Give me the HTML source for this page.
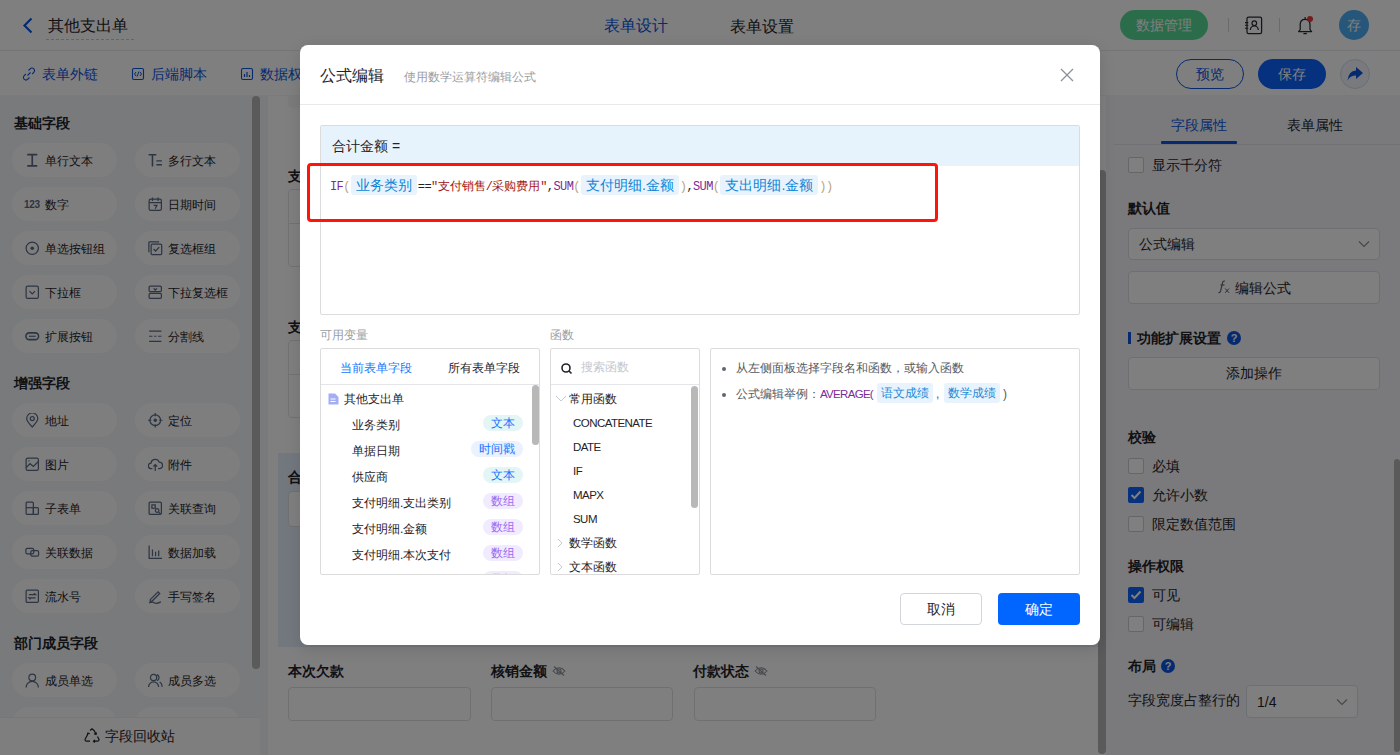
<!DOCTYPE html>
<html><head><meta charset="utf-8">
<style>
*{box-sizing:border-box;margin:0;padding:0}
html,body{width:1400px;height:755px;overflow:hidden;background:#fff;font-family:"Liberation Sans",sans-serif;color:#1f2329}
.a{position:absolute}
.nw{white-space:nowrap}
/* header */
#hdr{left:0;top:0;width:1400px;height:51px;background:#fff;border-bottom:1px solid #e9eaec}
#tb{left:0;top:51px;width:1400px;height:45px;background:#fff;border-bottom:1px solid #f4f5f7}
/* sidebar */
#side{left:0;top:96px;width:268px;height:659px;background:#f2f4f7}
.sec{position:absolute;left:14px;font-size:14px;font-weight:bold;line-height:16px;color:#1f2329}
.fb{position:absolute;width:105px;height:34px;border-radius:17px;background:#fdfdfd;font-size:12px;line-height:34px;color:#1f2329}
.fb svg{position:absolute;left:13px;top:10px}
.fb span{position:absolute;left:33px;top:1px}
#canvas{left:268px;top:96px;width:838px;height:659px;background:#fff}
#rp{left:1106px;top:96px;width:294px;height:659px;background:#f4f5f8}
#mask{left:0;top:0;width:1400px;height:755px;background:rgba(0,0,0,.5)}
#modal{left:300px;top:45px;width:800px;height:600px;background:#fff;border-radius:8px;box-shadow:0 4px 16px rgba(0,0,0,.12)}
.pill{height:16px;border-radius:8px;font-size:12px;line-height:16px;text-align:center}
.t1{background:#e3f6f5;color:#1677ff}
.t2{background:#eaf1ff;color:#1677ff}
.t3{background:#f0ebff;color:#9b6cf0}
.fn{font-size:11.5px;line-height:20px;color:#1f2329;letter-spacing:-0.55px}
.fx{font-family:"Liberation Mono",monospace;font-size:12px;line-height:20px;color:#1f2329}
.fx .p{color:#7b2a9a;letter-spacing:-0.6px}
.fx .br{color:#b9a47a;letter-spacing:-0.6px}
.fx .k{color:#1f2329;letter-spacing:-0.6px}
.fx .s{color:#a31515;font-family:"Liberation Sans",sans-serif;font-size:12px}
.fx .s.m{font-family:"Liberation Mono",monospace;letter-spacing:-0.6px}
.fx .tg{display:inline-block;position:relative;top:-1px;font-family:"Liberation Sans",sans-serif;font-size:14px;line-height:20px;height:20px;padding:0 5px;margin:0 1px;background:#e9f3fd;color:#0a84d6;border-radius:3px;vertical-align:top}
.tg2{font-size:12px;line-height:20px;height:20px;background:#e8f3fd;color:#1b8ad6;border-radius:3px}
</style></head><body>
<div id="page">
 <div id="hdr" class="a">
  <svg class="a" style="left:22px;top:17px" width="12" height="17" viewBox="0 0 12 17"><path d="M9.5 1.5 L2.5 8.5 L9.5 15.5" fill="none" stroke="#0a55e0" stroke-width="2.2"/></svg>
  <div class="a nw" style="left:48px;top:16px;font-size:16px;line-height:20px;color:#1f2329">其他支出单</div>
  <div class="a" style="left:46px;top:39px;width:88px;border-top:1px dashed #c9cbd0"></div>
  <div class="a nw" style="left:604px;top:16px;font-size:16px;line-height:20px;color:#0a55e0">表单设计</div>
  <div class="a nw" style="left:730px;top:16px;font-size:16.3px;line-height:20px;color:#1f2329">表单设置</div>
  <div class="a nw" style="left:1120px;top:10px;width:88px;height:30px;border-radius:15px;background:#56d896;color:#fff;font-size:14px;line-height:30px;text-align:center">数据管理</div>
  <div class="a" style="left:1228px;top:18px;width:1px;height:14px;background:#d5d7db"></div>
  <svg class="a" style="left:1244px;top:15px" width="20" height="20" viewBox="0 0 20 20"><rect x="3" y="2" width="14.6" height="16.6" rx="1.6" fill="none" stroke="#262b33" stroke-width="1.25"/><circle cx="10.3" cy="8.2" r="2.3" fill="none" stroke="#262b33" stroke-width="1.2"/><path d="M6.3 15 Q6.6 11 10.3 11 Q14 11 14.3 15" fill="none" stroke="#262b33" stroke-width="1.2"/><path d="M1 7.6h3.3M1 10.3h3.3M1 13.2h3.3" stroke="#262b33" stroke-width="1.1"/></svg>
  <div class="a" style="left:1279px;top:18px;width:1px;height:14px;background:#d5d7db"></div>
  <svg class="a" style="left:1296px;top:15px" width="20" height="21" viewBox="0 0 20 21"><path d="M2.6 16.6 L4.2 14.6 V9.6 Q4.2 4.3 9.1 4.3 Q14 4.3 14 9.6 V14.6 L15.6 16.6 Z" fill="none" stroke="#262b33" stroke-width="1.25" stroke-linejoin="round"/><path d="M7.4 18.6h3.4" stroke="#262b33" stroke-width="1.3"/><path d="M9.1 2v2.3" stroke="#262b33" stroke-width="1.2"/><circle cx="14" cy="3.9" r="3" fill="#e8383d"/></svg>
  <div class="a nw" style="left:1339px;top:10px;width:30px;height:30px;border-radius:15px;background:#4dacf2;color:#fff;font-size:14px;line-height:30px;text-align:center">存</div>
 </div>
 <div id="tb" class="a">
  <svg class="a" style="left:22px;top:16px" width="14" height="14" viewBox="0 0 14 14"><path d="M5.5 8.5 L8.5 5.5" stroke="#0a55e0" stroke-width="1.1"/><path d="M6.5 3.5 L8.2 1.8 a2.3 2.3 0 0 1 3.6 3.6 L10.2 7" fill="none" stroke="#0a55e0" stroke-width="1.1"/><path d="M7.5 10.5 L5.8 12.2 a2.3 2.3 0 0 1 -3.6 -3.6 L3.8 7" fill="none" stroke="#0a55e0" stroke-width="1.1"/></svg>
  <div class="a nw" style="left:42px;top:14px;font-size:14px;line-height:18px;color:#0a55e0">表单外链</div>
  <svg class="a" style="left:131px;top:16px" width="14" height="14" viewBox="0 0 14 14"><rect x="1.5" y="1.5" width="11" height="11" rx="1.5" fill="none" stroke="#0a55e0" stroke-width="1.1"/><path d="M5 5 L3.5 7 L5 9 M9 5 L10.5 7 L9 9 M8 4.5 L6 9.5" fill="none" stroke="#0a55e0" stroke-width="1"/></svg>
  <div class="a nw" style="left:151px;top:14px;font-size:14px;line-height:18px;color:#0a55e0">后端脚本</div>
  <svg class="a" style="left:240px;top:16px" width="14" height="14" viewBox="0 0 14 14"><rect x="1.5" y="1.5" width="11" height="11" rx="1.5" fill="none" stroke="#0a55e0" stroke-width="1.1"/><path d="M4.5 10 V7 M7 10 V5 M9.5 10 V8" stroke="#0a55e0" stroke-width="1.2"/></svg>
  <div class="a nw" style="left:260px;top:14px;font-size:14px;line-height:18px;color:#0a55e0">数据权限</div>
  <div class="a nw" style="left:1176px;top:8px;width:68px;height:30px;border-radius:15px;border:1px solid #0a55e0;color:#0a55e0;font-size:14px;line-height:28px;text-align:center">预览</div>
  <div class="a nw" style="left:1258px;top:8px;width:68px;height:30px;border-radius:15px;background:#0a62ff;color:#fff;font-size:14px;line-height:30px;text-align:center">保存</div>
  <div class="a" style="left:1340px;top:8px;width:30px;height:30px;border-radius:15px;border:1px solid #d3dcec;background:#f0f4fb"></div>
  <svg class="a" style="left:1346px;top:15px" width="18" height="16" viewBox="0 0 18 16"><path d="M10 1 L17 7 L10 13 L10 9.5 Q4 9.5 1.5 14.5 Q2.5 5 10 4.5 Z" fill="#0a55e0"/></svg>
 </div>
 <div id="side" class="a">
<div class="sec nw" style="top:19px">基础字段</div>
<div class="fb nw" style="left:12px;top:47px"><svg width="14.5" height="14.5" viewBox="0 0 13 13" fill="none" stroke="#5a6a86" stroke-width="1.1"><path d="M2 1.5h9M2 11.5h9M6.5 1.5v10" stroke-width="1.5"/></svg><span>单行文本</span></div>
<div class="fb nw" style="left:135px;top:47px"><svg width="14.5" height="14.5" viewBox="0 0 13 13" fill="none" stroke="#5a6a86" stroke-width="1.1"><path d="M0.5 1.5h7M4 1.5v10.5" stroke-width="1.4"/><path d="M7.5 7h5M7.5 10.5h5" stroke-width="1.2"/></svg><span>多行文本</span></div>
<div class="fb nw" style="left:12px;top:91px"><svg width="16" height="13" viewBox="0 0 16 13" style="left:12px"><text x="0" y="10.5" font-family="Liberation Sans" font-weight="bold" font-size="10" letter-spacing="-0.3" fill="#5a6a86">123</text></svg><span>数字</span></div>
<div class="fb nw" style="left:135px;top:91px"><svg width="14.5" height="14.5" viewBox="0 0 13 13" fill="none" stroke="#5a6a86" stroke-width="1.1"><rect x="1" y="2" width="11" height="10" rx="1.5"/><path d="M1 5h11M4 0.5v3M9 0.5v3M5 7.5h3l-1.5 3"/></svg><span>日期时间</span></div>
<div class="fb nw" style="left:12px;top:135px"><svg width="14.5" height="14.5" viewBox="0 0 13 13" fill="none" stroke="#5a6a86" stroke-width="1.1"><circle cx="6.5" cy="6.5" r="5.5"/><circle cx="6.5" cy="6.5" r="1.6" fill="#5a6a86" stroke="none"/></svg><span>单选按钮组</span></div>
<div class="fb nw" style="left:135px;top:135px"><svg width="14.5" height="14.5" viewBox="0 0 13 13" fill="none" stroke="#5a6a86" stroke-width="1.1"><path d="M0.8 10V1.5a0.8 0.8 0 0 1 .8-.8H10"/><rect x="2.8" y="2.8" width="9.5" height="9.5" rx="1"/><path d="M5 7.2l1.8 1.8 3.3-3.5"/></svg><span>复选框组</span></div>
<div class="fb nw" style="left:12px;top:179px"><svg width="14.5" height="14.5" viewBox="0 0 13 13" fill="none" stroke="#5a6a86" stroke-width="1.1"><rect x="1" y="1" width="11" height="11" rx="1.5"/><path d="M4 5.5l2.5 2.5 2.5-2.5"/></svg><span>下拉框</span></div>
<div class="fb nw" style="left:135px;top:179px"><svg width="14.5" height="14.5" viewBox="0 0 13 13" fill="none" stroke="#5a6a86" stroke-width="1.1"><rect x="1" y="1" width="11" height="5" rx="1"/><rect x="1" y="7.5" width="11" height="4.5" rx="1"/><path d="M5 3l1.5 1.5 1.5-1.5"/></svg><span>下拉复选框</span></div>
<div class="fb nw" style="left:12px;top:223px"><svg width="14.5" height="14.5" viewBox="0 0 13 13" fill="none" stroke="#5a6a86" stroke-width="1.1"><rect x="0.8" y="3.5" width="11.4" height="6" rx="3" stroke-width="1.4"/><path d="M3.5 6.5h6"/></svg><span>扩展按钮</span></div>
<div class="fb nw" style="left:135px;top:223px"><svg width="14.5" height="14.5" viewBox="0 0 13 13" fill="none" stroke="#5a6a86" stroke-width="1.1"><path d="M1 2h11M1 6.5h3M5.5 6.5h2M9 6.5h3M1 11h11"/></svg><span>分割线</span></div>
<div class="sec nw" style="top:279px">增强字段</div>
<div class="fb nw" style="left:12px;top:307px"><svg width="14.5" height="14.5" viewBox="0 0 13 13" fill="none" stroke="#5a6a86" stroke-width="1.1"><path d="M6.5 12.5C3 9 1.5 7 1.5 5a5 5 0 0 1 10 0c0 2-1.5 4-5 7.5z"/><circle cx="6.5" cy="5" r="1.8"/></svg><span>地址</span></div>
<div class="fb nw" style="left:135px;top:307px"><svg width="14.5" height="14.5" viewBox="0 0 13 13" fill="none" stroke="#5a6a86" stroke-width="1.1"><circle cx="6.5" cy="6.5" r="4.8"/><circle cx="6.5" cy="6.5" r="1" fill="#5a6a86"/><path d="M6.5 0v3M6.5 10v3M0 6.5h3M10 6.5h3"/></svg><span>定位</span></div>
<div class="fb nw" style="left:12px;top:351px"><svg width="14.5" height="14.5" viewBox="0 0 13 13" fill="none" stroke="#5a6a86" stroke-width="1.1"><rect x="1" y="1" width="11" height="11" rx="1.5"/><path d="M1 9.5l3.5-3.5 3 2.5 4.5-4.5M3 3.5h1"/></svg><span>图片</span></div>
<div class="fb nw" style="left:135px;top:351px"><svg width="14.5" height="14.5" viewBox="0 0 13 13" fill="none" stroke="#5a6a86" stroke-width="1.1"><path d="M4 10.5H3a2.5 2.5 0 0 1-.3-5A3.8 3.8 0 0 1 10 4.5a3 3 0 0 1 0 6H9"/><path d="M6.5 12.5V7M4.8 8.5l1.7-1.7 1.7 1.7"/></svg><span>附件</span></div>
<div class="fb nw" style="left:12px;top:395px"><svg width="14.5" height="14.5" viewBox="0 0 13 13" fill="none" stroke="#5a6a86" stroke-width="1.1"><rect x="1" y="1" width="6.5" height="11" rx="0.8"/><path d="M1 6h6.5"/><rect x="7.5" y="6" width="4.5" height="6" rx="0.8"/></svg><span>子表单</span></div>
<div class="fb nw" style="left:135px;top:395px"><svg width="14.5" height="14.5" viewBox="0 0 13 13" fill="none" stroke="#5a6a86" stroke-width="1.1"><rect x="1" y="1" width="11" height="11" rx="1"/><rect x="3.5" y="3.5" width="3" height="3"/><circle cx="8.2" cy="8.5" r="1.6"/><path d="M9.4 9.8l1.8 1.8"/></svg><span>关联查询</span></div>
<div class="fb nw" style="left:12px;top:439px"><svg width="14.5" height="14.5" viewBox="0 0 13 13" fill="none" stroke="#5a6a86" stroke-width="1.1"><rect x="0.8" y="3" width="7" height="5" rx="1.2"/><rect x="5.2" y="5" width="7" height="5" rx="1.2"/></svg><span>关联数据</span></div>
<div class="fb nw" style="left:135px;top:439px"><svg width="14.5" height="14.5" viewBox="0 0 13 13" fill="none" stroke="#5a6a86" stroke-width="1.1"><path d="M1 0.5v11.5h11.5M4 4v6M6.8 6v4M9.6 5v5"/></svg><span>数据加载</span></div>
<div class="fb nw" style="left:12px;top:483px"><svg width="14.5" height="14.5" viewBox="0 0 13 13" fill="none" stroke="#5a6a86" stroke-width="1.1"><rect x="1" y="1" width="11" height="11" rx="1"/><path d="M3.5 5h6l-1.5-1.3M9.5 8h-6l1.5 1.3"/></svg><span>流水号</span></div>
<div class="fb nw" style="left:135px;top:483px"><svg width="14.5" height="14.5" viewBox="0 0 13 13" fill="none" stroke="#5a6a86" stroke-width="1.1"><path d="M2 9.5L9 2.5l1.5 1.5-7 7H2z"/><path d="M1 12.5c2-1 3.5-1 5 0s3.5 0 5.5-1"/></svg><span>手写签名</span></div>
<div class="sec nw" style="top:539px">部门成员字段</div>
<div class="fb nw" style="left:12px;top:567px"><svg width="14.5" height="14.5" viewBox="0 0 13 13" fill="none" stroke="#5a6a86" stroke-width="1.1"><circle cx="6.5" cy="4" r="3"/><path d="M1 13a5.5 5.5 0 0 1 11 0"/></svg><span>成员单选</span></div>
<div class="fb nw" style="left:135px;top:567px"><svg width="14.5" height="14.5" viewBox="0 0 13 13" fill="none" stroke="#5a6a86" stroke-width="1.1"><circle cx="5" cy="4" r="2.8"/><path d="M0.5 12.5a4.5 4.5 0 0 1 9 0"/><path d="M8 1.5a2.8 2.8 0 0 1 0 5.3M10.5 8a4.5 4.5 0 0 1 2 4.5"/></svg><span>成员多选</span></div>
<div class="fb nw" style="left:12px;top:611px"><svg width="14.5" height="14.5" viewBox="0 0 13 13" fill="none" stroke="#5a6a86" stroke-width="1.1"><circle cx="6.5" cy="4" r="3"/><path d="M1 13a5.5 5.5 0 0 1 11 0"/></svg><span>部门单选</span></div>
<div class="fb nw" style="left:135px;top:611px"><svg width="14.5" height="14.5" viewBox="0 0 13 13" fill="none" stroke="#5a6a86" stroke-width="1.1"><circle cx="5" cy="4" r="2.8"/><path d="M0.5 12.5a4.5 4.5 0 0 1 9 0"/><path d="M8 1.5a2.8 2.8 0 0 1 0 5.3M10.5 8a4.5 4.5 0 0 1 2 4.5"/></svg><span>部门多选</span></div>
<div class="a" style="left:252px;top:0;width:8px;height:573px;border-radius:4px;background:#b5b5b5"></div>
<div class="a" style="left:0;top:621px;width:260px;height:38px;background:#fdfdfd;border-top:1px solid #eceef1"></div>
<svg class="a" style="left:84px;top:632px" width="16" height="15" viewBox="0 0 16 15" fill="none" stroke="#1f2329" stroke-width="1.2"><path d="M6 2.5L8 0.8l2 1.7 2 3.5M12.5 4.5l-.5 2-2-.8M4 6L1.2 11a1.5 1.5 0 0 0 1.3 2.2H6M3.2 6.8L4 5l1.8.8M9.5 13.2h4a1.5 1.5 0 0 0 1.3-2.2L13.5 8.5M10.8 11.8l-1.3 1.4 1.3 1.3"/></svg>
<div class="a nw" style="left:105px;top:630px;font-size:14px;line-height:20px;color:#1f2329">字段回收站</div>
</div>
 <div id="canvas" class="a">
  <div class="a" style="left:20px;top:0;width:60px;height:11px;border-radius:0 0 4px 4px;background:#f6f6f7;box-shadow:0 1px 2px rgba(0,0,0,.04)"></div>
  <div class="a nw" style="left:20px;top:72px;font-size:14px;font-weight:bold;line-height:16px">支付明细</div>
  <div class="a" style="left:20px;top:93px;width:800px;height:78px;border:1px solid #e3e5e8;border-radius:4px"><div class="a" style="left:0;top:33px;width:100%;border-top:1px solid #e3e5e8"></div></div>
  <div class="a nw" style="left:20px;top:223px;font-size:14px;font-weight:bold;line-height:16px">支出明细</div>
  <div class="a" style="left:20px;top:244px;width:800px;height:78px;border:1px solid #e3e5e8;border-radius:4px"><div class="a" style="left:0;top:33px;width:100%;border-top:1px solid #e3e5e8"></div></div>
  <div class="a" style="left:10px;top:357px;width:820px;height:194px;background:#e6eefc"></div>
  <div class="a nw" style="left:20px;top:373px;font-size:14px;font-weight:bold;line-height:16px">合计金额</div>
  <div class="a" style="left:20px;top:395px;width:183px;height:36px;border:1px solid #dfe1e5;border-radius:4px;background:#fff"></div>
  <div class="a nw" style="left:20px;top:567px;font-size:14px;font-weight:bold;line-height:16px">本次欠款</div>
  <div class="a" style="left:20px;top:591px;width:183px;height:34px;border:1px solid #dfe1e5;border-radius:4px;background:#fff"></div>
  <div class="a nw" style="left:223px;top:567px;font-size:14px;font-weight:bold;line-height:16px">核销金额</div>
  <svg class="a" style="left:284px;top:570px" width="14" height="10" viewBox="0 0 14 10" fill="none" stroke="#8a8f99" stroke-width="1.1"><path d="M1 5Q7 -1.5 13 5Q7 11.5 1 5Z"/><circle cx="7" cy="5" r="2"/><path d="M2 0.5l10 9"/></svg>
  <div class="a" style="left:223px;top:591px;width:182px;height:34px;border:1px solid #dfe1e5;border-radius:4px;background:#fff"></div>
  <div class="a nw" style="left:425px;top:567px;font-size:14px;font-weight:bold;line-height:16px">付款状态</div>
  <svg class="a" style="left:486px;top:570px" width="14" height="10" viewBox="0 0 14 10" fill="none" stroke="#8a8f99" stroke-width="1.1"><path d="M1 5Q7 -1.5 13 5Q7 11.5 1 5Z"/><circle cx="7" cy="5" r="2"/><path d="M2 0.5l10 9"/></svg>
  <div class="a" style="left:426px;top:591px;width:182px;height:34px;border:1px solid #dfe1e5;border-radius:4px;background:#fff"></div>
  <div class="a" style="left:830px;top:74px;width:8px;height:584px;border-radius:4px;background:#b5b5b5"></div>
 </div>
 <div id="rp" class="a">
  <div class="a nw" style="left:65px;top:19px;font-size:14px;line-height:20px;color:#0a55e0">字段属性</div>
  <div class="a nw" style="left:181px;top:19px;font-size:14px;line-height:20px;color:#1f2329">表单属性</div>
  <div class="a" style="left:8px;top:48px;width:286px;border-top:1px solid #e1e3e8"></div>
  <div class="a" style="left:55px;top:45px;width:76px;height:3px;background:#0a55e0;border-radius:1px"></div>
  <div class="a" style="left:22px;top:61px;width:16px;height:16px;border-radius:2px;border:1px solid #c9ccd2;background:#fff"></div><div class="a nw" style="left:46px;top:59px;font-size:14px;line-height:20px;color:#1f2329">显示千分符</div>
  <div class="a nw" style="left:22px;top:102px;font-size:14px;font-weight:bold;line-height:20px">默认值</div>
  <div class="a" style="left:22px;top:132px;width:252px;height:32px;border:1px solid #dcdfe5;border-radius:4px;background:#fff"></div>
  <div class="a nw" style="left:33px;top:138px;font-size:14px;line-height:20px">公式编辑</div>
  <svg class="a" style="left:252px;top:144px" width="12" height="8" viewBox="0 0 12 8"><path d="M1 1.5l5 5 5-5" fill="none" stroke="#8a8f99" stroke-width="1.2"/></svg>
  <div class="a" style="left:22px;top:175px;width:252px;height:33px;border:1px solid #dcdfe5;border-radius:4px;background:#fff"></div>
  <svg class="a" style="left:111px;top:184px" width="14" height="14" viewBox="0 0 14 14" fill="none" stroke="#5b6270" stroke-width="1.1"><path d="M8 1.2 Q6.2 0.6 5.6 2.5 L3.6 11 Q3 13 1.5 12.6"/><path d="M3.5 5h4"/><path d="M8.2 8.5l3.8 4.3M12 8.5l-3.8 4.3" stroke-width="1"/></svg>
  <div class="a nw" style="left:129px;top:182px;font-size:14px;line-height:20px">编辑公式</div>
  <div class="a" style="left:22px;top:236px;width:3px;height:12px;background:#0a55e0"></div>
  <div class="a nw" style="left:31px;top:232px;font-size:14px;font-weight:bold;line-height:20px">功能扩展设置</div>
  <div class="a" style="left:121px;top:235px;width:14px;height:14px;border-radius:7px;background:#0a55e0;color:#fff;font-size:11px;font-weight:bold;line-height:14px;text-align:center">?</div>
  <div class="a" style="left:22px;top:261px;width:252px;height:33px;border:1px solid #dcdfe5;border-radius:4px;background:#fff"></div>
  <div class="a nw" style="left:120px;top:267px;font-size:14px;line-height:20px">添加操作</div>
  <div class="a nw" style="left:22px;top:331px;font-size:14px;font-weight:bold;line-height:20px">校验</div>
  <div class="a" style="left:22px;top:362px;width:16px;height:16px;border-radius:2px;border:1px solid #c9ccd2;background:#fff"></div><div class="a nw" style="left:46px;top:360px;font-size:14px;line-height:20px;color:#1f2329">必填</div>
  <div class="a" style="left:22px;top:391px;width:16px;height:16px;border-radius:2px;background:#0a62ff"><svg class="a" style="left:2px;top:3px" width="12" height="10" viewBox="0 0 12 10"><path d="M1.5 5l3 3 6-6.5" fill="none" stroke="#fff" stroke-width="2"/></svg></div><div class="a nw" style="left:46px;top:389px;font-size:14px;line-height:20px;color:#1f2329">允许小数</div>
  <div class="a" style="left:22px;top:420px;width:16px;height:16px;border-radius:2px;border:1px solid #c9ccd2;background:#fff"></div><div class="a nw" style="left:46px;top:418px;font-size:14px;line-height:20px;color:#1f2329">限定数值范围</div>
  <div class="a nw" style="left:22px;top:460px;font-size:14px;font-weight:bold;line-height:20px">操作权限</div>
  <div class="a" style="left:22px;top:491px;width:16px;height:16px;border-radius:2px;background:#0a62ff"><svg class="a" style="left:2px;top:3px" width="12" height="10" viewBox="0 0 12 10"><path d="M1.5 5l3 3 6-6.5" fill="none" stroke="#fff" stroke-width="2"/></svg></div><div class="a nw" style="left:46px;top:489px;font-size:14px;line-height:20px;color:#1f2329">可见</div>
  <div class="a" style="left:22px;top:520px;width:16px;height:16px;border-radius:2px;border:1px solid #c9ccd2;background:#fff"></div><div class="a nw" style="left:46px;top:518px;font-size:14px;line-height:20px;color:#1f2329">可编辑</div>
  <div class="a nw" style="left:22px;top:560px;font-size:14px;font-weight:bold;line-height:20px">布局</div>
  <div class="a" style="left:55px;top:563px;width:14px;height:14px;border-radius:7px;background:#0a55e0;color:#fff;font-size:11px;font-weight:bold;line-height:14px;text-align:center">?</div>
  <div class="a nw" style="left:22px;top:594px;font-size:14px;line-height:20px">字段宽度占整行的</div>
  <div class="a" style="left:140px;top:589px;width:112px;height:33px;border:1px solid #dcdfe5;border-radius:4px;background:#fff"></div>
  <div class="a nw" style="left:151px;top:596px;font-size:14px;line-height:20px">1/4</div>
  <svg class="a" style="left:230px;top:602px" width="12" height="8" viewBox="0 0 12 8"><path d="M1 1.5l5 5 5-5" fill="none" stroke="#8a8f99" stroke-width="1.2"/></svg>
  <div class="a" style="left:288px;top:363px;width:6px;height:293px;border-radius:3px;background:#b5b5b5"></div>
 </div>
</div>
<div id="mask" class="a"></div>
<div id="modal" class="a">
  <div class="a nw" style="left:20px;top:20px;font-size:16px;line-height:22px;color:#1f2329">公式编辑</div>
  <div class="a nw" style="left:104px;top:22px;font-size:12px;line-height:20px;color:#9a9da3">使用数学运算符编辑公式</div>
  <svg class="a" style="left:760px;top:23px" width="14" height="14" viewBox="0 0 14 14"><path d="M1 1l12 12M13 1L1 13" stroke="#8c9098" stroke-width="1.3"/></svg>
  <div class="a" style="left:0;top:59px;width:800px;border-top:1px solid #e8e9eb"></div>
  <div class="a" style="left:20px;top:80px;width:760px;height:190px;border:1px solid #dcdcdc;border-radius:2px;background:#fff">
    <div class="a" style="left:0;top:0;width:758px;height:40px;background:#e6f3fd"></div>
    <div class="a nw" style="left:11px;top:10px;font-size:14px;line-height:20px;color:#1f2329">合计金额 =</div>
    <div class="a nw fx" style="left:9px;top:50px"><span class="p">IF</span><span class="br">(</span><span class="tg">业务类别</span><span class="k">==</span><span class="s m">"</span><span class="s">支付销售</span><span class="s m">/</span><span class="s">采购费用</span><span class="s m">"</span><span class="k">,</span><span class="p">SUM</span><span class="br">(</span><span class="tg">支付明细.金额</span><span class="br">)</span><span class="k">,</span><span class="p">SUM</span><span class="br">(</span><span class="tg">支出明细.金额</span><span class="br">))</span></div>
  </div>
  <div class="a" style="left:7px;top:118px;width:631px;height:59px;border:3px solid #ff140a;border-radius:4px"></div>
  <div class="a nw" style="left:20px;top:280px;font-size:12px;line-height:20px;color:#9a9da3">可用变量</div>
  <div class="a nw" style="left:250px;top:280px;font-size:12px;line-height:20px;color:#9a9da3">函数</div>
  <div class="a" style="left:20px;top:303px;width:220px;height:227px;border:1px solid #dcdcdc;border-radius:2px;overflow:hidden">
    <div class="a nw" style="left:19px;top:9px;font-size:12px;line-height:20px;color:#1677ff">当前表单字段</div>
    <div class="a nw" style="left:127px;top:9px;font-size:12px;line-height:20px;color:#1f2329">所有表单字段</div>
    <div class="a" style="left:0;top:35px;width:218px;border-top:1px solid #e3e5e8"></div>
    <div class="a" style="left:0;top:36px;width:218px;height:190px">
      <svg class="a" style="left:7px;top:8px" width="11" height="12" viewBox="0 0 11 12"><path d="M0.5 0.5h6.5l3.5 3.5v7.5h-10z" fill="#a3aef5"/><path d="M2.5 6h5M2.5 8.5h5" stroke="#fff" stroke-width="1"/></svg>
      <div class="a nw" style="left:23px;top:4px;font-size:12px;line-height:20px;color:#1f2329">其他支出单</div>
      <div class="a nw" style="left:31px;top:30px;font-size:12px;line-height:20px;color:#1f2329">业务类别</div><div class="a nw pill t1" style="left:162px;top:30px;width:40px">文本</div><div class="a nw" style="left:31px;top:56px;font-size:12px;line-height:20px;color:#1f2329">单据日期</div><div class="a nw pill t2" style="left:150px;top:56px;width:52px">时间戳</div><div class="a nw" style="left:31px;top:82px;font-size:12px;line-height:20px;color:#1f2329">供应商</div><div class="a nw pill t1" style="left:162px;top:82px;width:40px">文本</div><div class="a nw" style="left:31px;top:108px;font-size:12px;line-height:20px;color:#1f2329">支付明细.支出类别</div><div class="a nw pill t3" style="left:162px;top:108px;width:40px">数组</div><div class="a nw" style="left:31px;top:134px;font-size:12px;line-height:20px;color:#1f2329">支付明细.金额</div><div class="a nw pill t3" style="left:162px;top:134px;width:40px">数组</div><div class="a nw" style="left:31px;top:160px;font-size:12px;line-height:20px;color:#1f2329">支付明细.本次支付</div><div class="a nw pill t3" style="left:162px;top:160px;width:40px">数组</div><div class="a nw" style="left:31px;top:186px;font-size:12px;line-height:20px;color:#1f2329">支付明细.未付</div><div class="a nw pill t3" style="left:162px;top:186px;width:40px">数组</div>
      <div class="a" style="left:211px;top:0;width:7px;height:60px;border-radius:3.5px;background:#b8b8b8"></div>
    </div>
  </div>
  <div class="a" style="left:250px;top:303px;width:150px;height:227px;border:1px solid #dcdcdc;border-radius:2px;overflow:hidden">
    <svg class="a" style="left:10px;top:14px" width="12" height="12" viewBox="0 0 12 12"><circle cx="5" cy="5" r="4" fill="none" stroke="#1f2329" stroke-width="1.6"/><path d="M8 8l2.5 2.5" stroke="#1f2329" stroke-width="1.6"/></svg>
    <div class="a nw" style="left:30px;top:8px;font-size:12px;line-height:20px;color:#c3c7ce">搜索函数</div>
    <div class="a" style="left:0;top:35px;width:148px;border-top:1px solid #e3e5e8"></div>
    <div class="a" style="left:0;top:36px;width:148px;height:190px">
      <svg class="a" style="left:4px;top:10px" width="12" height="8" viewBox="0 0 12 8"><path d="M1 1l5 5 5-5" fill="none" stroke="#c5cad3" stroke-width="1"/></svg><div class="a nw" style="left:18px;top:4px;font-size:12px;line-height:20px">常用函数</div><div class="a nw fn" style="left:22px;top:28px">CONCATENATE</div><div class="a nw fn" style="left:22px;top:52px">DATE</div><div class="a nw fn" style="left:22px;top:76px">IF</div><div class="a nw fn" style="left:22px;top:100px">MAPX</div><div class="a nw fn" style="left:22px;top:124px">SUM</div><svg class="a" style="left:6px;top:153px" width="6" height="10" viewBox="0 0 6 10"><path d="M1 1l4 4-4 4" fill="none" stroke="#c5cad3" stroke-width="1"/></svg><div class="a nw" style="left:18px;top:148px;font-size:12px;line-height:20px">数学函数</div><svg class="a" style="left:6px;top:177px" width="6" height="10" viewBox="0 0 6 10"><path d="M1 1l4 4-4 4" fill="none" stroke="#c5cad3" stroke-width="1"/></svg><div class="a nw" style="left:18px;top:172px;font-size:12px;line-height:20px">文本函数</div>
      <div class="a" style="left:140px;top:1px;width:7px;height:122px;border-radius:3.5px;background:#b8b8b8"></div>
    </div>
  </div>
  <div class="a" style="left:410px;top:303px;width:370px;height:227px;border:1px solid #dcdcdc;border-radius:2px">
    <div class="a" style="left:11px;top:18px;width:4px;height:4px;border-radius:2px;background:#5f6670"></div>
    <div class="a nw" style="left:25px;top:9px;font-size:12px;line-height:20px;color:#555a62">从左侧面板选择字段名和函数，或输入函数</div>
    <div class="a" style="left:11px;top:44px;width:4px;height:4px;border-radius:2px;background:#5f6670"></div>
    <div class="a nw" style="left:25px;top:35px;font-size:12px;line-height:20px;color:#555a62">公式编辑举例：</div>
    <div class="a nw" style="left:109px;top:35px;font-size:11.5px;line-height:20px;color:#7b2a9a;letter-spacing:-0.7px">AVERAGE(</div>
    <div class="a nw tg2" style="left:166px;top:34px;width:56px;text-align:center">语文成绩</div>
    <div class="a nw" style="left:225px;top:35px;font-size:12px;line-height:20px;color:#555a62">,</div>
    <div class="a nw tg2" style="left:233px;top:34px;width:56px;text-align:center">数学成绩</div>
    <div class="a nw" style="left:292px;top:35px;font-size:12px;line-height:20px;color:#555a62">)</div>
  </div>
  <div class="a nw" style="left:600px;top:548px;width:82px;height:32px;border:1px solid #d2d5da;border-radius:4px;font-size:14px;line-height:30px;text-align:center;color:#1f2329">取消</div>
  <div class="a nw" style="left:698px;top:548px;width:82px;height:32px;border-radius:4px;background:#0066ff;font-size:14px;line-height:32px;text-align:center;color:#fff">确定</div>
 </div>
</body></html>
